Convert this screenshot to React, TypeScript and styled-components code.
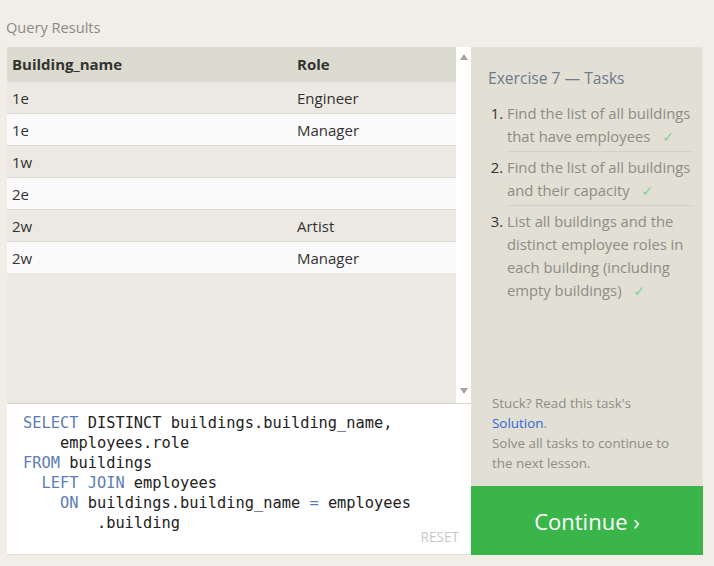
import React from "react";
import styled, { createGlobalStyle } from "styled-components";

const Global = createGlobalStyle`
  html, body { margin: 0; padding: 0; background: #f0eee6; }
  body { font-family: "Open Sans", "Noto Sans", sans-serif; }
`;

const Page = styled.div`
  width: 714px;
  height: 566px;
  box-sizing: border-box;
  padding: 17px 11px 0 7px;
`;

const Title = styled.div`
  font-size: 14.6px;
  line-height: 20px;
  color: #8a8a86;
  margin: 0 0 10px -1px;
`;

const Main = styled.div`
  display: grid;
  grid-template-columns: 464px 232px;
  grid-template-rows: 356px 83px 69px;
  grid-template-areas:
    "results side"
    "editor side"
    "editor button";
`;

const Results = styled.div`
  grid-area: results;
  display: flex;
  background: #ebe9e1;
`;

const TableArea = styled.div`
  flex: 1;
`;

const Table = styled.table`
  width: 100%;
  border-collapse: collapse;
  font-size: 15px;
  color: #333;
`;

const Th = styled.th<{ w?: string }>`
  text-align: left;
  font-weight: 700;
  background: #dcdbcf;
  height: 34px;
  padding: 0 5px;
  width: ${(p) => p.w || "auto"};
`;

const Tr = styled.tr<{ even: boolean }>`
  background: ${(p) => (p.even ? "#fafafa" : "#ebe9e1")};
  td { border-top: 1px solid #dedcd4; }
`;

const Td = styled.td`
  height: 31px;
  padding: 0 5px;
`;

const Scrollbar = styled.div`
  width: 15px;
  background: #ffffff;
  display: flex;
  flex-direction: column;
  justify-content: space-between;
  align-items: center;
  padding: 7px 0 9px;
  box-sizing: border-box;
`;

const Arrow = styled.div<{ down?: boolean }>`
  width: 0;
  height: 0;
  border-left: 4px solid transparent;
  border-right: 4px solid transparent;
  ${(p) =>
    p.down
      ? "border-top: 6px solid #a3a3a3;"
      : "border-bottom: 6px solid #a3a3a3;"}
`;

const Side = styled.div`
  grid-area: side;
  background: #e2dfd4;
  border-right: 1px solid #ebe9e0;
  display: flex;
  flex-direction: column;
  justify-content: space-between;
  padding: 20px 8px 13px 17px;
  box-sizing: border-box;
`;

const SideTitle = styled.div`
  font-size: 15.6px;
  line-height: 22px;
  color: #6f7a8c;
  margin-bottom: 9px;
`;

const TaskList = styled.ol`
  margin: 0;
  padding: 0 0 0 19px;
`;

const Task = styled.li`
  font-size: 14.8px;
  line-height: 23px;
  color: #8e8d87;
  padding: 4px 0 3px;
  border-bottom: 1px solid #d4d1c6;
  &:last-child { border-bottom: none; }
  &::marker { color: #333; }
`;

const Check = styled.span`
  display: inline-block;
  font-family: "DejaVu Sans", sans-serif;
  font-size: 14px;
  line-height: 14px;
  color: #86cf92;
  margin-left: 12px;
`;

const Help = styled.div`
  font-size: 13.4px;
  line-height: 20px;
  color: #8e8d87;
  padding: 0 22px 0 4px;
`;

const Link = styled.span`
  color: #3366dd;
`;

const Editor = styled.div`
  grid-area: editor;
  position: relative;
  background: #ffffff;
  border-top: 1px solid #d8d6ce;
  border-bottom: 1px solid #e0ded6;
  box-sizing: border-box;
  padding: 9px 16px;
`;

const Code = styled.pre`
  margin: 0;
  font-family: "DejaVu Sans Mono", "Liberation Mono", monospace;
  font-size: 15.35px;
  line-height: 20px;
  color: #222;
`;

const Kw = styled.span`
  color: #5b7cb4;
`;

const Reset = styled.div`
  position: absolute;
  right: 12px;
  bottom: 8px;
  font-size: 13.6px;
  color: #c8c8c8;
`;

const ContinueButton = styled.div`
  grid-area: button;
  background: #3ab54a;
  color: #fff;
  display: flex;
  align-items: center;
  justify-content: center;
  font-size: 22px;
`;

const rows: [string, string][] = [
  ["1e", "Engineer"],
  ["1e", "Manager"],
  ["1w", ""],
  ["2e", ""],
  ["2w", "Artist"],
  ["2w", "Manager"],
];

export default function App() {
  return (
    <Page>
      <Global />
      <Title>Query Results</Title>
      <Main>
        <Results>
          <TableArea>
            <Table>
              <thead>
                <tr>
                  <Th w="275px">Building_name</Th>
                  <Th>Role</Th>
                </tr>
              </thead>
              <tbody>
                {rows.map((r, i) => (
                  <Tr key={i} even={i % 2 === 1}>
                    <Td>{r[0]}</Td>
                    <Td>{r[1]}</Td>
                  </Tr>
                ))}
              </tbody>
            </Table>
          </TableArea>
          <Scrollbar>
            <Arrow />
            <Arrow down />
          </Scrollbar>
        </Results>
        <Side>
          <div>
            <SideTitle>Exercise 7 — Tasks</SideTitle>
            <TaskList>
              <Task>
                Find the list of all buildings that have employees<Check>✓</Check>
              </Task>
              <Task>
                Find the list of all buildings and their capacity<Check>✓</Check>
              </Task>
              <Task>
                List all buildings and the distinct employee roles in each
                building (including empty buildings)<Check>✓</Check>
              </Task>
            </TaskList>
          </div>
          <Help>
            Stuck? Read this task's
            <br />
            <Link>Solution</Link>.
            <br />
            Solve all tasks to continue to the next lesson.
          </Help>
        </Side>
        <Editor>
          <Code>
            <Kw>SELECT</Kw> DISTINCT buildings.building_name,{"\n"}
            {"    "}employees.role{"\n"}
            <Kw>FROM</Kw> buildings{"\n"}
            {"  "}<Kw>LEFT JOIN</Kw> employees{"\n"}
            {"    "}<Kw>ON</Kw> buildings.building_name <Kw>=</Kw> employees{"\n"}
            {"        "}.building
          </Code>
          <Reset>RESET</Reset>
        </Editor>
        <ContinueButton>Continue ›</ContinueButton>
      </Main>
    </Page>
  );
}
